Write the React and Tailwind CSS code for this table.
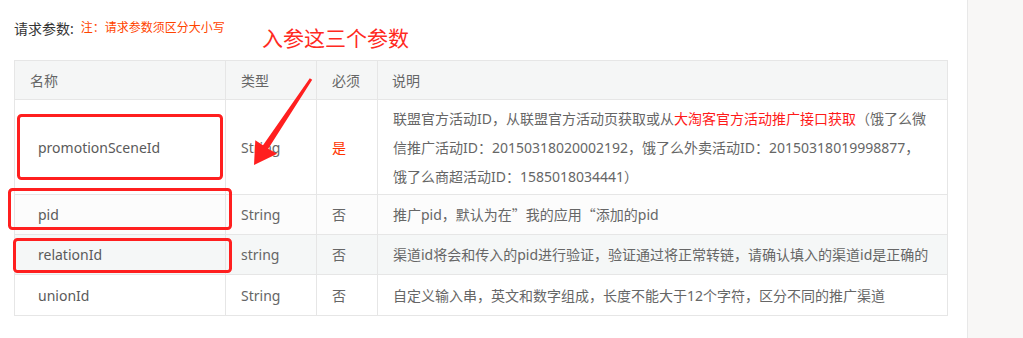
import React from "react";

const FONT = { fontFamily: '"Noto Sans", "Noto Sans CJK SC", sans-serif' };

// full-width CJK quotation marks
const Q = ({ children }) => <span className="font-['Noto_Sans_CJK_SC']">{children}</span>;

const rows = [
  {
    name: "promotionSceneId",
    type: "String",
    required: "是",
    requiredRed: true,
    desc: (
      <>
        联盟官方活动ID，从联盟官方活动页获取或从
        <span className="text-[#ff1a1a]">大淘客官方活动推广接口获取</span>
        （饿了么微信推广活动ID：20150318020002192，饿了么外卖活动ID：20150318019998877，饿了么商超活动ID：1585018034441）
      </>
    ),
    h: "h-[95px]",
    bg: "bg-white",
  },
  {
    name: "pid",
    type: "String",
    required: "否",
    desc: (
      <>
        推广pid，默认为在<Q>”</Q>我的应用<Q>“</Q>添加的pid
      </>
    ),
    h: "h-[40px]",
    bg: "bg-[#fcfcfc]",
  },
  {
    name: "relationId",
    type: "string",
    required: "否",
    desc: "渠道id将会和传入的pid进行验证，验证通过将正常转链，请确认填入的渠道id是正确的",
    h: "h-[40px]",
    bg: "bg-[#f5f7f7]",
  },
  {
    name: "unionId",
    type: "String",
    required: "否",
    desc: "自定义输入串，英文和数字组成，长度不能大于12个字符，区分不同的推广渠道",
    h: "h-[40px]",
    bg: "bg-white",
  },
];

const COLS = "grid grid-cols-[211px_91px_61px_569px]";

function HeaderRow() {
  return (
    <div className={`${COLS} h-[39px] border-b border-[#e6e6e6] bg-[#f5f6f6] text-[14px] text-[#666]`}>
      <div className="flex items-center border-r border-[#e6e6e6] pl-[15px]">名称</div>
      <div className="flex items-center border-r border-[#e6e6e6] pl-[15px]">类型</div>
      <div className="flex items-center border-r border-[#e6e6e6] pl-[15px]">必须</div>
      <div className="flex items-center pl-[14px]">说明</div>
    </div>
  );
}

function BodyRow({ row, last }) {
  return (
    <div
      className={`${COLS} ${row.h} ${row.bg} ${last ? "" : "border-b border-[#e6e6e6]"} text-[14px] text-[#666]`}
    >
      <div className="flex items-center border-r border-[#e6e6e6] pl-[23px] text-[#5a5a5a]">{row.name}</div>
      <div className="flex items-center border-r border-[#e6e6e6] pl-[15px]">{row.type}</div>
      <div
        className={`flex items-center border-r border-[#e6e6e6] pl-[15px] ${row.requiredRed ? "text-[#ff3300]" : ""}`}
      >
        {row.required}
      </div>
      <div className="flex items-center pl-[15px] pr-[14px] leading-[29px]">
        <p>{row.desc}</p>
      </div>
    </div>
  );
}

function Markup() {
  // hand-drawn highlight boxes and pointer arrow laid over the table
  return (
    <svg
      className="pointer-events-none absolute left-0 top-0"
      width="968"
      height="338"
      viewBox="0 0 968 338"
    >
      <g fill="none" stroke="#ff1f1f" strokeWidth="3">
        <rect x="18.5" y="115.5" width="203" height="63" rx="3" />
        <rect x="9.5" y="189.5" width="221" height="39" rx="3" />
        <rect x="14.5" y="239.5" width="216" height="32" rx="3" />
      </g>
      <polygon
        fill="#ff1f1f"
        points="309.8,78.3 312.2,79.7 268.2,148.8 277.2,153.8 254,165 255.3,140.2 263,145.2"
      />
    </svg>
  );
}

export default function App() {
  return (
    <div className="flex h-[338px] w-[1023px] overflow-hidden bg-white" style={FONT}>
      <main className="relative w-[968px] shrink-0 border-r border-[#e8e8e8] bg-white pl-[14px] pt-[18px]">
        <div className="flex h-[20px] items-center">
          <span className="text-[14px] text-[#333]">请求参数:</span>
          <span className="ml-[7px] text-[12px] text-[#ff4400]">注：请求参数须区分大小写</span>
        </div>
        <span className="absolute left-[262px] top-[23px] text-[21px] leading-[30px] text-[#ff2a1f]">
          入参这三个参数
        </span>
        <div className="mt-[22px] w-[934px] border border-[#e6e6e6]">
          <HeaderRow />
          {rows.map((r, i) => (
            <BodyRow key={r.name} row={r} last={i === rows.length - 1} />
          ))}
        </div>
        <Markup />
      </main>
      <aside className="flex-1 bg-[#f8f7f6]" />
    </div>
  );
}
